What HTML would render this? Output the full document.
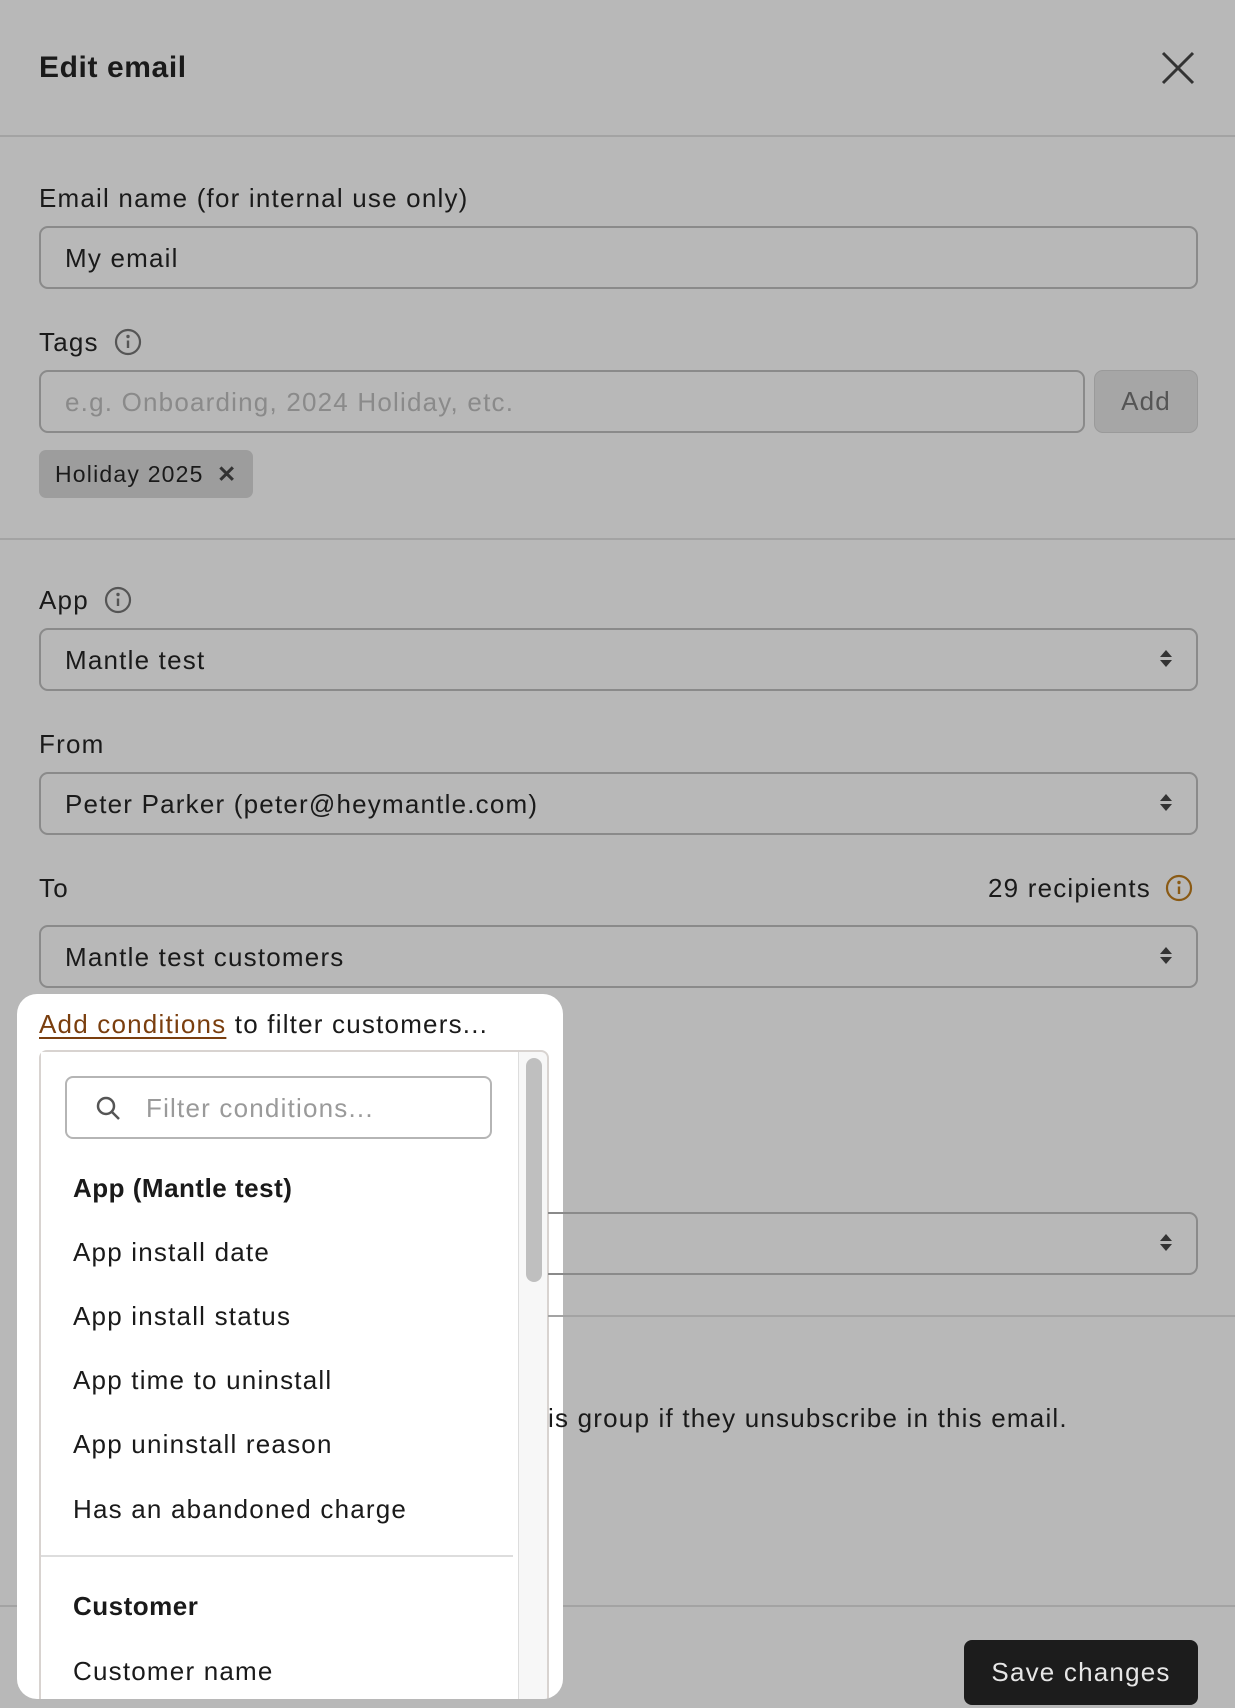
<!DOCTYPE html>
<html><head><meta charset="utf-8"><style>
*{box-sizing:border-box;margin:0;padding:0}
body{width:1235px;height:1708px;overflow:hidden;background:#b8b8b8;font-family:"Liberation Sans",sans-serif;color:#1a1a1a;position:relative;letter-spacing:1.2px}
.a{position:absolute}
.t{font-size:26px;line-height:30px;white-space:nowrap}
.box{position:absolute;left:39px;width:1159px;height:63px;border:2px solid #8a8a8a;border-radius:9px}
.box .t{position:absolute;left:24px;top:15px}
.hr{position:absolute;left:0;width:1235px;height:2px;background:#a3a3a3}
.arr{position:absolute;right:30px;top:20px;width:0;height:0}
.arr:before,.arr:after{content:"";position:absolute;left:-6px;border-left:6px solid transparent;border-right:6px solid transparent}
.arr:before{top:0;border-bottom:7px solid #333}
.arr:after{top:10px;border-top:7px solid #333}
.info{position:absolute}
.item{position:absolute;left:73px;font-size:26px;line-height:30px;white-space:nowrap;color:#1a1a1a}
.b{font-weight:bold;letter-spacing:0.5px}
</style></head><body>
<div class="a" style="left:39px;top:50px;font-size:30px;font-weight:bold;line-height:36px;letter-spacing:0.6px">Edit email</div>
<svg class="a" style="left:1160px;top:50px" width="36" height="36"><path d="M3 3L33 33M33 3L3 33" stroke="#333" stroke-width="3"/></svg>
<div class="hr" style="top:135px"></div>

<div class="a t" style="left:39px;top:183px">Email name (for internal use only)</div>
<div class="box" style="top:226px"><div class="t">My email</div></div>
<div class="a t" style="left:39px;top:327px">Tags</div>
<svg class="info" style="left:114px;top:328px" width="28" height="28"><circle cx="14" cy="14" r="12" fill="none" stroke="#555" stroke-width="2.2"/><circle cx="14" cy="8.5" r="1.7" fill="#555"/><path d="M14 12.5V20" stroke="#555" stroke-width="2.4"/></svg>
<div class="box" style="top:370px;width:1046px"><div class="t" style="color:#8a8a8a">e.g. Onboarding, 2024 Holiday, etc.</div></div>
<div class="a" style="left:1094px;top:370px;width:104px;height:63px;background:#a6a6a6;border:1px solid #9a9a9a;border-radius:9px;font-size:26px;line-height:61px;text-align:center;color:#555">Add</div>
<div class="a" style="left:39px;top:450px;width:214px;height:48px;background:#9d9d9d;border-radius:7px;font-size:23px;line-height:48px;padding-left:16px;color:#1a1a1a;white-space:nowrap">Holiday 2025<span style="position:absolute;left:178px;font-weight:bold;color:#333">✕</span></div>
<div class="hr" style="top:538px"></div>

<div class="a t" style="left:39px;top:585px">App</div>
<svg class="info" style="left:104px;top:586px" width="28" height="28"><circle cx="14" cy="14" r="12" fill="none" stroke="#555" stroke-width="2.2"/><circle cx="14" cy="8.5" r="1.7" fill="#555"/><path d="M14 12.5V20" stroke="#555" stroke-width="2.4"/></svg>
<div class="box" style="top:628px"><div class="t">Mantle test</div><div class="arr"></div></div>
<div class="a t" style="left:39px;top:729px">From</div>
<div class="box" style="top:772px"><div class="t">Peter Parker (peter@heymantle.com)</div><div class="arr"></div></div>
<div class="a t" style="left:39px;top:873px">To</div>
<div class="a t" style="right:84px;top:873px;text-align:right">29 recipients</div>
<svg class="info" style="left:1165px;top:874px" width="28" height="28"><circle cx="14" cy="14" r="12" fill="none" stroke="#8a5a14" stroke-width="2.2"/><circle cx="14" cy="8.5" r="1.7" fill="#8a5a14"/><path d="M14 12.5V20" stroke="#8a5a14" stroke-width="2.4"/></svg>
<div class="box" style="top:925px"><div class="t">Mantle test customers</div><div class="arr"></div></div>

<div class="hr" style="top:1605px"></div>
<div class="a" style="left:964px;top:1640px;width:234px;height:65px;background:#1c1c1c;border-radius:8px;color:#e6e6e6;font-size:26px;line-height:65px;text-align:center">Save changes</div>

<div class="a" style="left:17px;top:994px;width:546px;height:705px;background:#fff;border-radius:20px;overflow:hidden">
 <div class="a t" style="left:22px;top:15px"><span style="color:#7a3e0e;text-decoration:underline;text-underline-offset:4px">Add conditions</span> to filter customers...</div>
 <div class="a" style="left:22px;top:56px;width:510px;height:700px;border:2px solid #d8d3d0;border-radius:8px;background:#f7f7f7">
  <div class="a" style="left:0;top:0;width:478px;height:700px;background:#fff;border-right:1px solid #ddd"></div>
  <div class="a" style="left:485px;top:6px;width:16px;height:224px;background:#bfbfbf;border-radius:8px"></div>
 </div>
 <div class="a" style="left:48px;top:82px;width:427px;height:63px;border:2px solid #b5b5b5;border-radius:8px">
  <svg class="a" style="left:28px;top:17px" width="28" height="28"><circle cx="11" cy="11" r="8" stroke="#555" stroke-width="2.5" fill="none"/><path d="M17 17L24 24" stroke="#555" stroke-width="2.5"/></svg>
  <div class="a t" style="left:79px;top:15px;color:#9a9a9a">Filter conditions...</div>
 </div>
 <div class="item b" style="left:56px;top:179px">App (Mantle test)</div>
 <div class="item" style="left:56px;top:243px">App install date</div>
 <div class="item" style="left:56px;top:307px">App install status</div>
 <div class="item" style="left:56px;top:371px">App time to uninstall</div>
 <div class="item" style="left:56px;top:435px">App uninstall reason</div>
 <div class="item" style="left:56px;top:500px">Has an abandoned charge</div>
 <div class="a" style="left:24px;top:561px;width:472px;height:2px;background:#ddd"></div>
 <div class="item b" style="left:56px;top:597px">Customer</div>
 <div class="item" style="left:56px;top:662px">Customer name</div>
</div>

<div class="a" style="left:548px;top:0;width:687px;height:1708px;overflow:hidden;z-index:2">
 <div class="box" style="top:1212px;left:-509px"><div class="arr"></div></div>
 <div class="hr" style="top:1315px;left:-548px"></div>
 <div class="a t" style="left:0;top:1403px">is group if they unsubscribe in this email.</div>
</div>
</body></html>
